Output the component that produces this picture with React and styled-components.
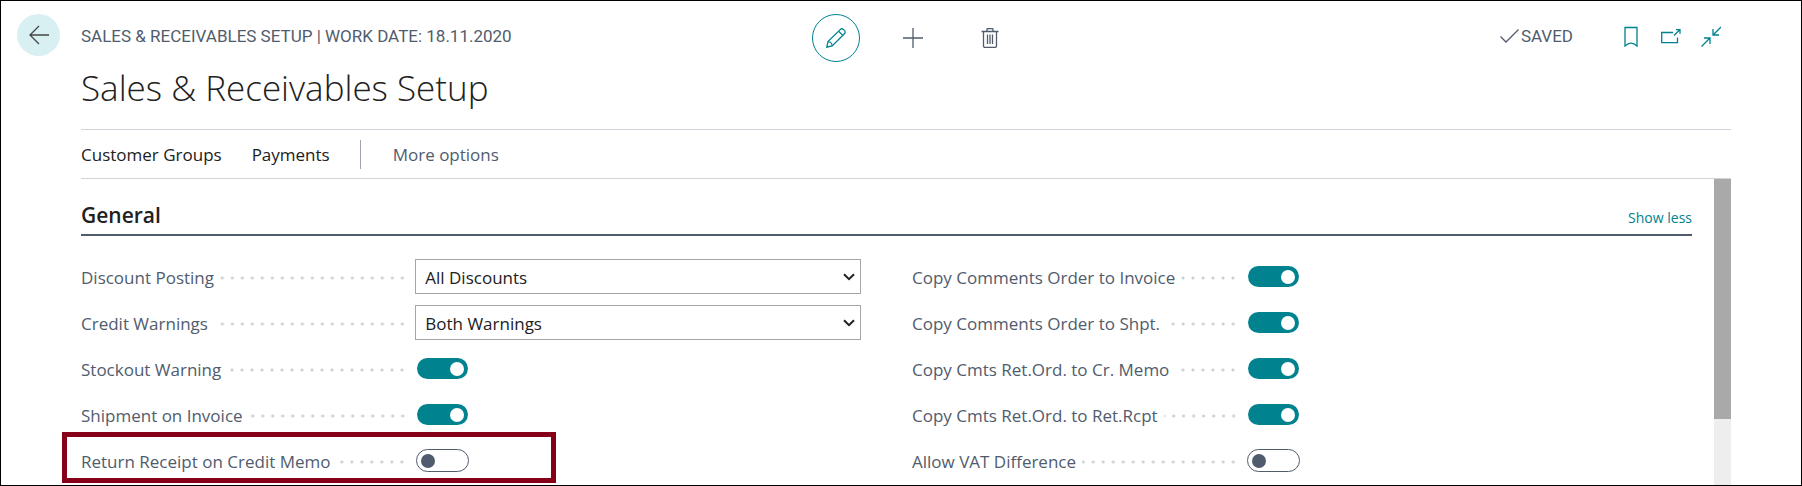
import React, { useState } from "react";
import styled, { createGlobalStyle } from "styled-components";

const GlobalStyle = createGlobalStyle`
  :root {
    --teal: #00838f;
    --slate: #505c6d;
    --ink: #212121;
    --line: #d1d3da;
    --font-body: "Open Sans", "Noto Sans", sans-serif;
    --font-caps: Roboto, "Liberation Sans", sans-serif;
  }

  * {
    box-sizing: border-box;
  }

  body {
    margin: 0;
    background: #fff;
    color: var(--ink);
    font-family: var(--font-body);
    font-size: 17px;
    font-weight: 400;
  }
`;

const Page = styled.div`
  display: flex;
  min-height: 100vh;
  padding: 13px 70px 0 16px;
  border: 1px solid #000;
`;

const BackButton = styled.button`
  display: flex;
  flex: none;
  align-items: center;
  justify-content: center;
  width: 43px;
  height: 42px;
  margin-right: 21px;
  padding: 0;
  border: none;
  border-radius: 50%;
  background: #d8f0f2;
  color: #444;
  cursor: pointer;
`;

const Main = styled.main`
  display: flex;
  flex: 1;
  flex-direction: column;
  min-width: 0;
`;

const Header = styled.header`
  display: grid;
  grid-template-columns: 1fr auto 1fr;
  height: 48px;
`;

const Kicker = styled.div`
  color: var(--slate);
  font-family: var(--font-caps);
  font-size: 17px;
  line-height: 44px;
  white-space: nowrap;
`;

const Tools = styled.div`
  display: flex;
  gap: 29px;
  margin-left: 14px;
`;

const ToolButton = styled.button`
  display: flex;
  align-items: center;
  justify-content: center;
  width: 48px;
  height: 48px;
  padding: 0;
  border: 1px solid ${(props) => (props.$active ? "var(--teal)" : "transparent")};
  border-radius: 50%;
  background: none;
  color: ${(props) => (props.$active ? "var(--teal)" : "var(--slate)")};
  cursor: pointer;
`;

const Status = styled.div`
  display: flex;
  align-items: center;
  justify-content: flex-end;
  height: 44px;
  padding-right: 10px;
`;

const SavedLabel = styled.span`
  display: flex;
  align-items: center;
  gap: 2px;
  margin-right: 48px;
  color: var(--slate);
  font-family: var(--font-caps);
  font-size: 17px;
`;

const IconButtons = styled.div`
  display: flex;
  gap: 20px;
`;

const IconButton = styled.button`
  display: flex;
  width: 20px;
  height: 22px;
  padding: 0;
  border: none;
  background: none;
  color: var(--teal);
  cursor: pointer;
`;

const Title = styled.h1`
  margin: 0;
  height: 67px;
  font-size: 35px;
  font-weight: 300;
  line-height: 52px;
`;

const ActionBar = styled.nav`
  display: flex;
  align-items: center;
  height: 50px;
  border-top: 1px solid var(--line);
  border-bottom: 1px solid var(--line);
`;

const Action = styled.button`
  margin-right: 30px;
  padding: 0;
  border: none;
  background: none;
  color: ${(props) => (props.$muted ? "var(--slate)" : "var(--ink)")};
  font: inherit;
  cursor: pointer;
`;

const Divider = styled.span`
  width: 1px;
  height: 29px;
  margin-right: 32px;
  background: #9fa5b1;
`;

const ScrollArea = styled.div`
  display: flex;
  flex: 1;
`;

const Content = styled.div`
  flex: 1;
  min-width: 0;
`;

const ScrollTrack = styled.div`
  width: 17px;
  margin-left: 22px;
  background: #eee;
`;

const ScrollThumb = styled.div`
  height: 240px;
  background: #a9a9a9;
`;

const SectionHeader = styled.div`
  display: flex;
  align-items: baseline;
  justify-content: space-between;
  height: 57px;
  padding-top: 20px;
  border-bottom: 2px solid var(--slate);
`;

const SectionTitle = styled.h2`
  margin: 0;
  font-size: 21px;
  font-weight: 600;
  line-height: 32px;
`;

const ShowLess = styled.a`
  color: var(--teal);
  font-size: 14px;
  text-decoration: none;
`;

const Columns = styled.div`
  display: grid;
  grid-template-columns: 1fr 1fr;
  gap: 51px;
  padding-top: 23px;
`;

const Column = styled.div`
  display: flex;
  flex-direction: column;
  gap: 11px;
`;

const Row = styled.div`
  position: relative;
  display: grid;
  grid-template-columns: 3fr 4fr;
  align-items: center;
  height: 35px;
`;

const LabelCell = styled.div`
  display: flex;
  align-items: center;
  padding-top: 2px;
  padding-right: 8px;
`;

const Label = styled.label`
  color: var(--slate);
  line-height: 33px;
  white-space: nowrap;
`;

const Leader = styled.span`
  flex: 1;
  height: 10px;
  margin-left: 6px;
  background: radial-gradient(circle, #cdd0d5 1px, transparent 2px) right center / 10px 10px
    repeat-x;
`;

const SelectBox = styled.div`
  display: grid;
  align-items: center;

  > * {
    grid-area: 1 / 1;
  }

  > svg {
    justify-self: end;
    margin-right: 6px;
    pointer-events: none;
  }
`;

const Select = styled.select`
  width: 100%;
  height: 35px;
  padding: 2px 24px 0 9px;
  border: 1px solid #a6a6a6;
  border-radius: 0;
  appearance: none;
  background: #fff;
  color: var(--ink);
  font: inherit;
`;

const Switch = styled.input`
  display: flex;
  align-items: center;
  width: 53px;
  height: 23px;
  margin: 0 0 0 1px;
  padding: 0 4px;
  border: 1px solid var(--slate);
  border-radius: 12px;
  appearance: none;
  background: #fff;
  background-clip: padding-box;
  cursor: pointer;

  &::before {
    content: "";
    width: 14px;
    height: 14px;
    border-radius: 50%;
    background: var(--slate);
  }

  &:checked {
    justify-content: flex-end;
    border-color: transparent;
    background-color: var(--teal);
  }

  &:checked::before {
    background: #fff;
  }
`;

// Marks a single row, drawn over its surroundings
const Highlight = styled.span`
  position: absolute;
  top: -11px;
  bottom: -5px;
  left: -19px;
  width: 494px;
  border: 5px solid #86001a;
  pointer-events: none;
`;

const leftFields = [
  { id: "discountPosting", label: "Discount Posting", options: ["All Discounts", "No Discounts"] },
  { id: "creditWarnings", label: "Credit Warnings", options: ["Both Warnings", "No Warning"] },
  { id: "stockoutWarning", label: "Stockout Warning", on: true },
  { id: "shipmentOnInvoice", label: "Shipment on Invoice", on: true },
  { id: "returnReceipt", label: "Return Receipt on Credit Memo", on: false, marked: true },
];

const rightFields = [
  { id: "commentsInvoice", label: "Copy Comments Order to Invoice", on: true },
  { id: "commentsShpt", label: "Copy Comments Order to Shpt.", on: true },
  { id: "cmtsCrMemo", label: "Copy Cmts Ret.Ord. to Cr. Memo", on: true },
  { id: "cmtsRetRcpt", label: "Copy Cmts Ret.Ord. to Ret.Rcpt", on: true },
  { id: "allowVat", label: "Allow VAT Difference", on: false },
];

const Svg = ({ width = 20, height = 20, stroke = 1.3, children }) => (
  <svg
    width={width}
    height={height}
    viewBox={`0 0 ${width} ${height}`}
    fill="none"
    stroke="currentColor"
    strokeWidth={stroke}
    aria-hidden="true"
  >
    {children}
  </svg>
);

const Field = ({ field }) => {
  const [on, setOn] = useState(field.on);

  return (
    <Row>
      <LabelCell>
        <Label htmlFor={field.id}>{field.label}</Label>
        <Leader />
      </LabelCell>
      {field.options ? (
        <SelectBox>
          <Select id={field.id}>
            {field.options.map((option) => (
              <option key={option}>{option}</option>
            ))}
          </Select>
          <Svg width={12} height={8} stroke={2}>
            <path d="m1 1.2 5 5 5-5" />
          </Svg>
        </SelectBox>
      ) : (
        <Switch
          id={field.id}
          type="checkbox"
          checked={on}
          onChange={(e) => setOn(e.target.checked)}
        />
      )}
      {field.marked && <Highlight />}
    </Row>
  );
};

const App = () => {
  return (
    <>
      <GlobalStyle />
      <Page>
        <BackButton aria-label="Back">
          <Svg>
            <path d="M10 1 1 10l9 9M1 10h19" />
          </Svg>
        </BackButton>
        <Main>
          <Header>
            <Kicker>SALES &amp; RECEIVABLES SETUP | WORK DATE: 18.11.2020</Kicker>
            <Tools>
              <ToolButton $active aria-label="Edit">
                <Svg>
                  <path d="M.8 19.2 2 13.6 14.2 1.6c1-1 2.4-1 3.4 0l.8.8c1 1 1 2.4 0 3.4L6.2 18Z" />
                  <path d="M2 13.6c2.3 0 4.2 2 4.2 4.4M12.6 3.2l4.2 4.2" />
                </Svg>
              </ToolButton>
              <ToolButton aria-label="New">
                <Svg>
                  <path d="M10 0v20M0 10h20" />
                </Svg>
              </ToolButton>
              <ToolButton aria-label="Delete">
                <Svg>
                  <path d="M1.5 3.5h17M7 3.5V1.5q0-1 1-1h4q1 0 1 1v2M3.5 3.5v14.5q0 1.4 1.4 1.4h10.2q1.4 0 1.4-1.4V3.5" />
                  <path d="M7.5 6.5v9.5M10 6.5v9.5M12.5 6.5v9.5" />
                </Svg>
              </ToolButton>
            </Tools>
            <Status>
              <SavedLabel>
                <Svg width={19} height={14}>
                  <path d="M.5 7.5 6 13 18.5.5" />
                </Svg>
                SAVED
              </SavedLabel>
              <IconButtons>
                <IconButton aria-label="Bookmark">
                  <Svg height={22}>
                    <path d="M4 2.5h12v18.5q-3-2.8-6-2.8t-6 2.8Z" />
                  </Svg>
                </IconButton>
                <IconButton aria-label="Open in new window">
                  <Svg height={22}>
                    <path d="M12 7.5H.7v10.2h15.8V12.5M13 10.5l6-6M15 4.6h4v4.2" />
                  </Svg>
                </IconButton>
                <IconButton aria-label="Collapse">
                  <Svg height={22}>
                    <path d="M20 2 12 10M12 4v6h6M.5 21.5l8.5-8.5M3 13h6v6" />
                  </Svg>
                </IconButton>
              </IconButtons>
            </Status>
          </Header>
          <Title>Sales &amp; Receivables Setup</Title>
          <ActionBar>
            <Action>Customer Groups</Action>
            <Action>Payments</Action>
            <Divider />
            <Action $muted>More options</Action>
          </ActionBar>
          <ScrollArea>
            <Content>
              <SectionHeader>
                <SectionTitle>General</SectionTitle>
                <ShowLess href="#general">Show less</ShowLess>
              </SectionHeader>
              <Columns>
                <Column>
                  {leftFields.map((field) => (
                    <Field key={field.id} field={field} />
                  ))}
                </Column>
                <Column>
                  {rightFields.map((field) => (
                    <Field key={field.id} field={field} />
                  ))}
                </Column>
              </Columns>
            </Content>
            <ScrollTrack>
              <ScrollThumb />
            </ScrollTrack>
          </ScrollArea>
        </Main>
      </Page>
    </>
  );
};

export default App;
